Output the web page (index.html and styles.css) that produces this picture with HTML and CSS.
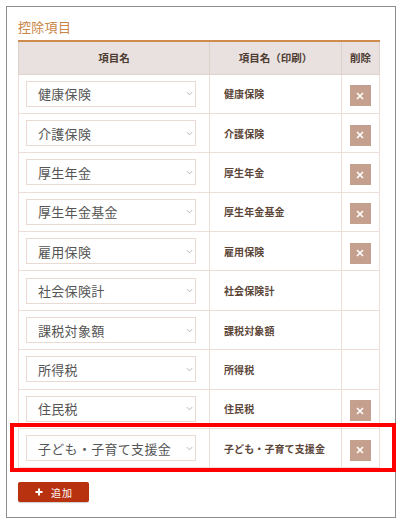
FILE: index.html
```html
<!DOCTYPE html>
<html lang="ja">
<head>
<meta charset="utf-8">
<link rel="stylesheet" href="styles.css">
</head>
<body>
<div class="panel">
  <h2 class="title">控除項目</h2>
  <table class="items">
    <colgroup><col class="c1"><col class="c2"><col class="c3"></colgroup>
    <thead>
      <tr><th>項目名</th><th>項目名（印刷）</th><th>削除</th></tr>
    </thead>
    <tbody>
      <tr><td><div class="sel"><span>健康保険</span><svg class="chev" viewBox="0 0 8 5"><path d="M1 1l3 3 3-3"/></svg></div></td><td class="print">健康保険</td><td class="del"><button class="x"><svg viewBox="0 0 8 8"><path d="M1 1l6 6M7 1l-6 6"/></svg></button></td></tr>
      <tr><td><div class="sel"><span>介護保険</span><svg class="chev" viewBox="0 0 8 5"><path d="M1 1l3 3 3-3"/></svg></div></td><td class="print">介護保険</td><td class="del"><button class="x"><svg viewBox="0 0 8 8"><path d="M1 1l6 6M7 1l-6 6"/></svg></button></td></tr>
      <tr><td><div class="sel"><span>厚生年金</span><svg class="chev" viewBox="0 0 8 5"><path d="M1 1l3 3 3-3"/></svg></div></td><td class="print">厚生年金</td><td class="del"><button class="x"><svg viewBox="0 0 8 8"><path d="M1 1l6 6M7 1l-6 6"/></svg></button></td></tr>
      <tr><td><div class="sel"><span>厚生年金基金</span><svg class="chev" viewBox="0 0 8 5"><path d="M1 1l3 3 3-3"/></svg></div></td><td class="print">厚生年金基金</td><td class="del"><button class="x"><svg viewBox="0 0 8 8"><path d="M1 1l6 6M7 1l-6 6"/></svg></button></td></tr>
      <tr><td><div class="sel"><span>雇用保険</span><svg class="chev" viewBox="0 0 8 5"><path d="M1 1l3 3 3-3"/></svg></div></td><td class="print">雇用保険</td><td class="del"><button class="x"><svg viewBox="0 0 8 8"><path d="M1 1l6 6M7 1l-6 6"/></svg></button></td></tr>
      <tr><td><div class="sel"><span>社会保険計</span><svg class="chev" viewBox="0 0 8 5"><path d="M1 1l3 3 3-3"/></svg></div></td><td class="print">社会保険計</td><td class="del"></td></tr>
      <tr><td><div class="sel"><span>課税対象額</span><svg class="chev" viewBox="0 0 8 5"><path d="M1 1l3 3 3-3"/></svg></div></td><td class="print">課税対象額</td><td class="del"></td></tr>
      <tr><td><div class="sel"><span>所得税</span><svg class="chev" viewBox="0 0 8 5"><path d="M1 1l3 3 3-3"/></svg></div></td><td class="print">所得税</td><td class="del"></td></tr>
      <tr><td><div class="sel"><span>住民税</span><svg class="chev" viewBox="0 0 8 5"><path d="M1 1l3 3 3-3"/></svg></div></td><td class="print">住民税</td><td class="del"><button class="x"><svg viewBox="0 0 8 8"><path d="M1 1l6 6M7 1l-6 6"/></svg></button></td></tr>
      <tr><td><div class="sel"><span>子ども・子育て支援金</span><svg class="chev" viewBox="0 0 8 5"><path d="M1 1l3 3 3-3"/></svg></div></td><td class="print">子ども・子育て支援金</td><td class="del"><button class="x"><svg viewBox="0 0 8 8"><path d="M1 1l6 6M7 1l-6 6"/></svg></button></td></tr>
    </tbody>
  </table>
  <button class="add"><svg class="plus" viewBox="0 0 8 8"><path d="M4 0.5v7M0.5 4h7"/></svg><span>追加</span></button>
  <div class="highlight"></div>
</div>
</body>
</html>
```
FILE: styles.css
```css
* { box-sizing: border-box; }
html, body { margin: 0; padding: 0; background: #fff; }
body {
  font-family: "Noto Sans CJK JP", "Noto Sans", sans-serif;
  width: 405px;
  height: 526px;
  overflow: hidden;
}
.panel {
  position: relative;
  margin: 6px;
  width: 390px;
  height: 512px;
  border: 1px solid #8c8c8c;
  padding: 9px 11px 0 11px;
}
.title {
  margin: 0;
  font-size: 13px;
  line-height: 22px;
  height: 24px;
  font-weight: 400;
  color: #c98546;
  letter-spacing: 0.3px;
}
.items {
  width: 361px;
  border-collapse: collapse;
  table-layout: fixed;
  border-top: 2px solid #cf8a4d;
}
.c1 { width: 191px; }
.c2 { width: 132px; }
.c3 { width: 38px; }
.items th {
  background: #e8e1df;
  height: 33px;
  padding: 0;
  font-size: 10.5px;
  font-weight: 700;
  color: #4e3c33;
  text-align: center;
  border-left: 1px solid #ddd0c9;
  border-right: 1px solid #ddd0c9;
  border-bottom: 1px solid #e2d3ca;
}
.items td {
  height: 39.4px;
  padding: 0;
  border: 1px solid #eddfd7;
  vertical-align: middle;
}
.items td:first-child { padding-left: 7px; }
.sel {
  width: 170px;
  height: 26px;
  border: 1px solid #eadbd2;
  background: #fff;
  display: flex;
  align-items: center;
  justify-content: space-between;
  padding: 0 2px 0 11px;
  font-size: 13px;
  color: #555;
  letter-spacing: 0.3px;
}
.chev {
  width: 7px;
  height: 5px;
  fill: none;
  stroke: #a0a0a0;
  stroke-width: 0.9;
}
.print {
  padding-left: 14px !important;
  font-size: 10px;
  font-weight: 700;
  color: #5c4639;
  letter-spacing: 0.1px;
}
.del { text-align: center; }
.x {
  width: 21px;
  height: 21px;
  border: 0;
  padding: 0;
  margin: 0 0 0 -1px;
  background: #c5a08e;
  display: inline-flex;
  align-items: center;
  justify-content: center;
  vertical-align: middle;
}
.x svg {
  width: 8px;
  height: 8px;
  stroke: #fff;
  stroke-width: 1.6;
  fill: none;
}
.add {
  margin-top: 14px;
  width: 71px;
  height: 20px;
  border: 0;
  border-radius: 2px;
  background: #b8320f;
  box-shadow: 0 1px 1px rgba(0,0,0,0.2);
  color: #fff;
  display: flex;
  align-items: center;
  padding: 0 0 0 17px;
  gap: 8px;
  font-family: "Noto Sans CJK JP", sans-serif;
  font-size: 10px;
  letter-spacing: 1px;
}
.plus {
  width: 8px;
  height: 8px;
  stroke: #fff;
  stroke-width: 2;
  fill: none;
}
.highlight {
  position: absolute;
  left: 3px;
  top: 416px;
  width: 386px;
  height: 49px;
  border: 4px solid #ff0000;
  pointer-events: none;
}
```
